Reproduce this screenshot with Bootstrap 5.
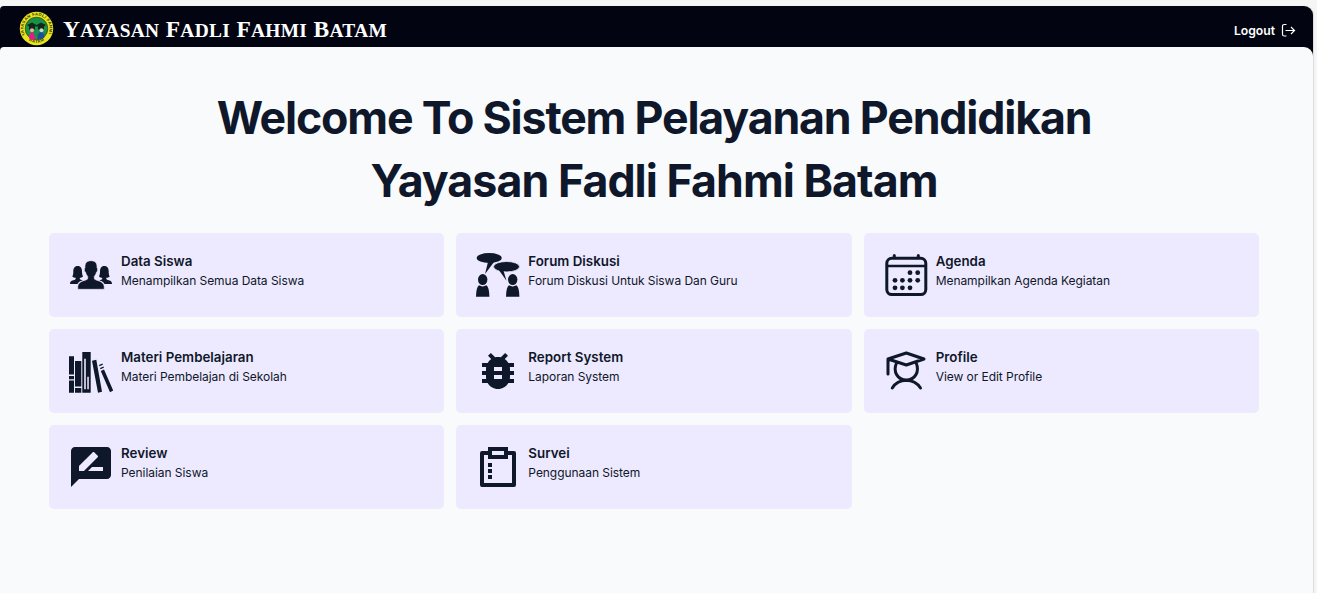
<!DOCTYPE html>
<html lang="id">
<head>
<meta charset="utf-8">
<meta name="viewport" content="width=device-width, initial-scale=1">
<title>Yayasan Fadli Fahmi Batam</title>
<link href="https://cdn.jsdelivr.net/npm/bootstrap@5.3.0/dist/css/bootstrap.min.css" rel="stylesheet">
<style>
body{background:#f5f5f5;font-family:Inter,sans-serif;color:#0f172a;height:100vh;overflow:hidden}
.shell{width:1313px;height:587px;margin-top:6px;background:#020412;border-radius:4px 9px 0 0;box-shadow:1px 0 1px #d9dadd}
.topbar{height:41px;padding:0 17px 0 19px}
.brand-name{font:bold 19.4px/1 "Liberation Serif",serif;color:#fff;letter-spacing:.3px;word-spacing:1.2px;margin-left:9px;padding-top:6px;white-space:nowrap}
.brand-name span{font-size:23.5px}
.logout{font-size:12.2px;font-weight:600;color:#fff;gap:6px;padding-top:9px}
.page-body{height:546px;background:#f9fafc;border-radius:4px 9px 0 0;padding:40px 54px 0 49px}
.welcome{font-size:44.7px;line-height:63px;font-weight:700;letter-spacing:-1.18px;margin:0 0 20px}
.welcome span{letter-spacing:-.96px}
.tiles{display:grid;grid-template-columns:repeat(3,1fr);gap:12px}
.tile{height:84px;background:#ede9fe;border-radius:5px;padding:18px;gap:6px;color:inherit}
.tile svg{width:48px;height:48px;flex:none;fill:#0f172a}
.tile svg .ln{fill:none;stroke:#0f172a;stroke-width:3;stroke-linecap:round;stroke-linejoin:round}
.tile svg .gap-fill{fill:#ede9fe}
.tile h2{font-size:13.35px;line-height:20px;font-weight:600;margin:0}
.tile p{font-size:12px;line-height:19px;margin:0;letter-spacing:-.05px}
</style>
</head>
<body>
<div class="shell">
<header class="topbar d-flex align-items-center justify-content-between">
  <div class="d-flex align-items-center">
    <svg width="35" height="35" viewBox="0 0 35 35" class="mt-1" aria-label="Logo">
      <circle cx="17.5" cy="17.5" r="16.7" fill="#e9e51c"/>
      <circle cx="17.5" cy="17.5" r="11.3" fill="#159447" stroke="#3c4510" stroke-width=".8"/>
      <defs><path id="ringTop" d="M6.200 24A13 13 0 1 1 28.800 24"/><path id="ringBottom" d="M8 28Q17.5 36 27 28"/></defs>
      <g font-family="Liberation Sans,sans-serif" font-weight="bold" fill="#33350c" font-size="4.2"><text><textPath href="#ringTop" textLength="52">YAYASAN FADLI FAHMI</textPath></text><text><textPath href="#ringBottom" startOffset="2" textLength="17">BATAM</textPath></text></g>
      <path d="M10 27.5Q10 21 14 21L16.7 28Q13 29.500 10 27.500Z" fill="#ee1686"/>
      <path d="M18.500 28Q18.500 21 22 21Q25 21 25.500 26.500Q22 29 18.500 28Z" fill="#244b9b"/>
      <path d="M8 14l5-2.500 4.500 2.500 4.500-2.500 5 2.500-2 1.500v3h-6v-3h-3v3h-6v-3z" fill="#15271c"/>
      <circle cx="13" cy="19.300" r="2" fill="#dfb9a0"/><circle cx="22.500" cy="19.300" r="2" fill="#cbd5ce"/>
    </svg>
    <div class="brand-name"><span>Y</span>AYASAN <span>F</span>ADLI <span>F</span>AHMI <span>B</span>ATAM</div>
  </div>
  <a class="logout d-flex align-items-center text-decoration-none" href="#">Logout
    <svg width="15" height="15" viewBox="0 0 15 15" fill="none" stroke="#fff" stroke-width="1.2"><path d="M5.500 1.500H3.300Q1.500 1.500 1.500 3.300V11.200Q1.500 13 3.300 13H5.500M4.500 7.500H13.500M10 4l3.500 3.500L10 11"/></svg>
  </a>
</header>
<main class="page-body">
  <h1 class="welcome text-center">Welcome To Sistem Pelayanan Pendidikan<br><span>Yayasan Fadli Fahmi Batam</span></h1>
  <div class="tiles">
    <a href="#" class="tile d-flex text-decoration-none">
      <svg viewBox="0 0 48 48"><g id="side"><path d="M10.700 15c3.300 0 4.300 2.600 4.300 5.500 0 2.500.5 3.600 1 5-.8.900-2 1.200-3.200 1.200v1.500l3 1.300c-3 .7-4.500 1.800-5.300 3.500H3c0-2.500 1-3 3.200-3.700 1.900-.6 2.600-.9 2.600-2.600-1.500 0-2.600-.3-3.500-1.200.9-1.700 1-2.700 1-5 0-3 1-5.500 4.400-5.500z"/></g><use href="#side" transform="matrix(-1 0 0 1 48 0)"/><path stroke="#ede9fe" stroke-width=".6" d="M24 9.700c4.600 0 6.400 2.800 6 7.200 1.200.6.600 3.700-.5 4.200-.5 2.200-1.300 3.400-2.200 4.200v2.600c1.800 1.800 9.700 1.900 9.900 7.500V38.300H10.800v-2.900c.2-5.600 8.100-5.700 9.900-7.500v-2.600c-.9-.8-1.700-2-2.200-4.200-1.100-.5-1.700-3.600-.5-4.200-.4-4.400 1.400-7.200 6-7.200z"/></svg>
      <div><h2>Data Siswa</h2><p>Menampilkan Semua Data Siswa</p></div>
    </a>
    <a href="#" class="tile d-flex text-decoration-none">
      <svg viewBox="0 0 48 48"><ellipse cx="15.200" cy="7" rx="12.500" ry="5"/><path d="M14 11l-3 12 9-12z"/><ellipse cx="32.500" cy="15.700" rx="13" ry="5.200" stroke="#ede9fe" stroke-width=".8"/><path d="M24.500 18.500l8 11.200-3-10z"/><g id="talker"><ellipse cx="8.700" cy="28.600" rx="4.700" ry="5.500"/><path d="M5 34.300Q8.700 36.500 12.400 34.300Q15.300 36.300 15.400 45.800H2Q2.100 36.300 5 34.300Z"/></g><use href="#talker" x="30"/></svg>
      <div><h2>Forum Diskusi</h2><p>Forum Diskusi Untuk Siswa Dan Guru</p></div>
    </a>
    <a href="#" class="tile d-flex text-decoration-none">
      <svg viewBox="0 0 48 48"><rect class="ln" x="4.800" y="7.300" width="39" height="36.300" rx="5"/><path class="ln" d="M12.300 4.500v2M36.300 4.500v2"/><path class="ln" style="stroke-width:2.500" d="M5 15h38.500"/><circle cx="28" cy="21.700" r="2.400"/><circle cx="35.700" cy="21.700" r="2.400"/><circle cx="13" cy="29.300" r="2.400"/><circle cx="20.400" cy="29.300" r="2.400"/><circle cx="28" cy="29.300" r="2.400"/><circle cx="35.700" cy="29.300" r="2.400"/><circle cx="13" cy="36.800" r="2.400"/><circle cx="20.400" cy="36.800" r="2.400"/><circle cx="28" cy="36.800" r="2.400"/></svg>
      <div><h2>Agenda</h2><p>Menampilkan Agenda Kegiatan</p></div>
    </a>
    <a href="#" class="tile d-flex text-decoration-none">
      <svg viewBox="0 0 48 48"><path d="M2 9.200h5v18.300H2zM2 29h5v3.200H2zM2 33.600h5v12.200H2zM8 14h6.300v25.500H8zM8 41h6.300v4.800H8zM15.300 5h8.400v40.800h-8.400zM25 13.700l4.300-1L35 44.700l-4 1zM33.800 24l3.200-1.400 9.200 21-3.200 1.600zM32 18l3.500-1.400.4 1.200-3.400 1.400zM33 21l3.500-1.400.4 1.200-3.400 1.400z"/><path class="gap-fill" opacity=".8" d="M17 11.700h2v30.500h-2zM20.100 29.700H22v12.500h-1.900z"/></svg>
      <div><h2>Materi Pembelajaran</h2><p>Materi Pembelajan di Sekolah</p></div>
    </a>
    <a href="#" class="tile d-flex text-decoration-none">
      <svg viewBox="0 0 24 24"><path d="M20 8h-2.810c-.45-.78-1.070-1.450-1.820-1.960L17 4.410 15.590 3l-2.170 2.170C12.960 5.060 12.490 5 12 5c-.49 0-.96.06-1.410.17L8.410 3 7 4.410l1.620 1.630C7.880 6.550 7.260 7.220 6.810 8H4v2h2.090c-.05.33-.09.66-.09 1v1H4v2h2v1c0 .34.04.67.09 1H4v2h2.810c1.040 1.790 2.970 3 5.190 3s4.150-1.210 5.190-3H20v-2h-2.090c.05-.33.09-.66.09-1v-1h2v-2h-2v-1c0-.34-.04-.67-.09-1H20V8zm-6 8h-4v-2h4v2zm0-4h-4v-2h4v2z"/></svg>
      <div><h2>Report System</h2><p>Laporan System</p></div>
    </a>
    <a href="#" class="tile d-flex text-decoration-none">
      <svg viewBox="0 0 48 48"><path class="ln" d="M6 27V12M6 12L24.300 6 42 12 24.300 18ZM14.500 16C10.500 25 16 33 24.300 33S38 25 34.200 16M10.300 41Q15 33.500 24.300 33.300Q33.500 33.500 38.500 41"/></svg>
      <div><h2>Profile</h2><p>View or Edit Profile</p></div>
    </a>
    <a href="#" class="tile d-flex text-decoration-none">
      <svg viewBox="0 0 24 24"><path d="M20 2H4c-1.100 0-1.990.9-1.990 2L2 22l4-4h14c1.100 0 2-.9 2-2V4c0-1.100-.9-2-2-2zM6 14v-2.470l6.880-6.880c.2-.2.51-.2.71 0l1.770 1.770c.2.2.2.51 0 .71L8.470 14H6zm12 0h-7.500l2-2H18v2z"/></svg>
      <div><h2>Review</h2><p>Penilaian Siswa</p></div>
    </a>
    <a href="#" class="tile d-flex text-decoration-none">
      <svg viewBox="0 0 24 24"><path fill-rule="evenodd" d="M7 2h10v2h3q1 0 1 1v16q0 1-1 1H4q-1 0-1-1V5q0-1 1-1h3zM9 4v2h6V4zM5 6v14h14V6h-2v2H7V6zM7 10h2v2H7zM7 13h2v2H7zM7 16h2v2H7z"/></svg>
      <div><h2>Survei</h2><p>Penggunaan Sistem</p></div>
    </a>
  </div>
</main>
</div>
<script src="https://cdn.jsdelivr.net/npm/bootstrap@5.3.0/dist/js/bootstrap.bundle.min.js"></script>
</body>
</html>
